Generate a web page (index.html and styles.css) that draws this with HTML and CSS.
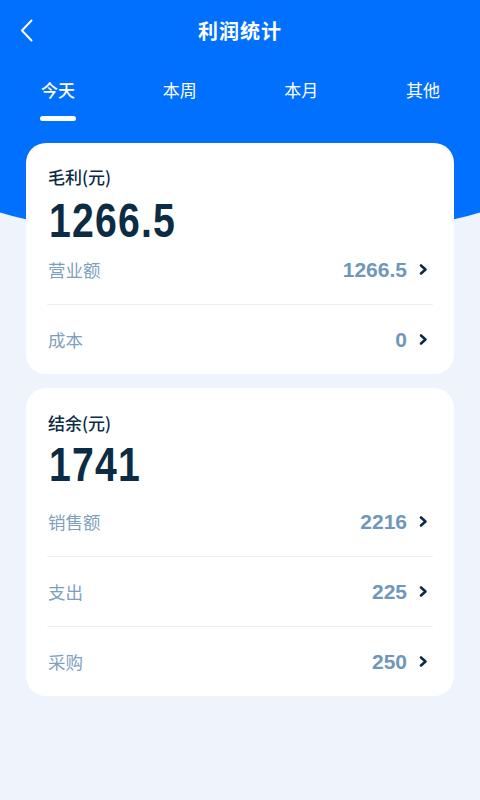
FILE: index.html
```html
<!DOCTYPE html>
<html lang="zh-CN">
<head>
<meta charset="utf-8">
<title>利润统计</title>
<link rel="stylesheet" href="styles.css">
</head>
<body>
<div class="page">
  <header class="nav">
    <div class="nav-left">
      <svg class="back" width="14" height="24" viewBox="0 0 14 24"><polyline points="11.5,1.5 2,11.5 11.5,21.5" fill="none" stroke="#fff" stroke-width="2" stroke-linecap="round" stroke-linejoin="round"/></svg>
    </div>
    <h1 class="nav-title">利润统计</h1>
    <div class="nav-right"></div>
  </header>
  <nav class="tabs">
    <div class="tab active"><span class="tab-text">今天</span><span class="tab-bar"></span></div>
    <div class="tab"><span class="tab-text">本周</span><span class="tab-bar"></span></div>
    <div class="tab"><span class="tab-text">本月</span><span class="tab-bar"></span></div>
    <div class="tab"><span class="tab-text">其他</span><span class="tab-bar"></span></div>
  </nav>
  <main class="cards">
    <section class="card card-gross">
      <div class="card-title">毛利(元)</div>
      <div class="card-amount"><span class="amount-num">1266.5</span></div>
      <div class="rows">
        <div class="row"><span class="row-label">营业额</span><span class="row-value">1266.5</span><svg class="chev" width="9" height="13" viewBox="0 0 9 13"><polyline points="2,2.5 6.5,6.5 2,10.5" fill="none" stroke="#0c2b45" stroke-width="2.6" stroke-linecap="round" stroke-linejoin="round"/></svg></div>
        <div class="row"><span class="row-label">成本</span><span class="row-value">0</span><svg class="chev" width="9" height="13" viewBox="0 0 9 13"><polyline points="2,2.5 6.5,6.5 2,10.5" fill="none" stroke="#0c2b45" stroke-width="2.6" stroke-linecap="round" stroke-linejoin="round"/></svg></div>
      </div>
    </section>
    <section class="card card-balance">
      <div class="card-title">结余(元)</div>
      <div class="card-amount"><span class="amount-num">1741</span></div>
      <div class="rows">
        <div class="row"><span class="row-label">销售额</span><span class="row-value">2216</span><svg class="chev" width="9" height="13" viewBox="0 0 9 13"><polyline points="2,2.5 6.5,6.5 2,10.5" fill="none" stroke="#0c2b45" stroke-width="2.6" stroke-linecap="round" stroke-linejoin="round"/></svg></div>
        <div class="row"><span class="row-label">支出</span><span class="row-value">225</span><svg class="chev" width="9" height="13" viewBox="0 0 9 13"><polyline points="2,2.5 6.5,6.5 2,10.5" fill="none" stroke="#0c2b45" stroke-width="2.6" stroke-linecap="round" stroke-linejoin="round"/></svg></div>
        <div class="row"><span class="row-label">采购</span><span class="row-value">250</span><svg class="chev" width="9" height="13" viewBox="0 0 9 13"><polyline points="2,2.5 6.5,6.5 2,10.5" fill="none" stroke="#0c2b45" stroke-width="2.6" stroke-linecap="round" stroke-linejoin="round"/></svg></div>
      </div>
    </section>
  </main>
</div>
</body>
</html>
```
FILE: styles.css
```css
html, body {
  margin: 0;
  padding: 0;
  background: #eff3fb;
}
body {
  font-family: "Noto Sans CJK SC", "Noto Sans", sans-serif;
  color: #0c2b45;
}
.page {
  position: relative;
  width: 480px;
  min-height: 800px;
  overflow: hidden;
  background: #eff3fb;
}
.page::before {
  content: "";
  position: absolute;
  top: 0;
  left: -60px;
  width: 600px;
  height: 240px;
  background: #0270fe;
  border-radius: 0 0 300px 300px / 0 0 69px 69px;
  z-index: 0;
}
.nav, .tabs, .cards {
  position: relative;
  z-index: 1;
}
.nav {
  height: 62px;
  display: grid;
  grid-template-columns: 1fr auto 1fr;
  align-items: center;
}
.nav-left {
  padding-left: 20px;
  display: flex;
  align-items: center;
}
.back {
  display: block;
}
.nav-title {
  margin: 0;
  font-size: 20px;
  font-weight: 700;
  color: #fff;
  line-height: 28px;
  letter-spacing: 1px;
}
.tabs {
  display: flex;
  justify-content: space-between;
  padding: 16px 39px 0 40px;
}
.tab {
  display: flex;
  flex-direction: column;
  align-items: center;
}
.tab-text {
  font-size: 17px;
  line-height: 24px;
  color: #fff;
  font-weight: 400;
}
.tab.active .tab-text {
  font-weight: 500;
}
.tab-bar {
  margin-top: 14px;
  width: 36px;
  height: 5px;
  border-radius: 3px;
  background: transparent;
}
.tab.active .tab-bar {
  background: #fff;
}
.cards {
  margin-top: 22px;
  padding: 0 26px;
  display: flex;
  flex-direction: column;
  gap: 14px;
}
.card {
  background: #fff;
  border-radius: 20px;
  padding: 22px 21px 0;
}
.card-title {
  font-size: 17px;
  line-height: 24px;
  font-weight: 500;
  color: #0c2b45;
  padding-left: 1px;
}
.card-amount {
  font-family: "Liberation Sans", "Roboto", sans-serif;
  font-weight: 700;
  font-size: 49px;
  line-height: 30px;
  color: #0c2b45;
  margin-top: 16px;
  padding-left: 2px;
}
.amount-num {
  display: inline-block;
  letter-spacing: 1.5px;
  transform: scaleX(0.8);
  transform-origin: left center;
}
.card-balance {
  padding-top: 23px;
}
.card-balance .card-amount {
  margin-top: 14px;
}
.card-balance .rows {
  margin-top: 8px;
}
.rows {
  display: flex;
  flex-direction: column;
}
.row {
  height: 69px;
  display: flex;
  align-items: center;
}
.row + .row {
  border-top: 1px solid #eceff4;
}
.row-label {
  flex: 1;
  font-size: 17.5px;
  color: #7f9fbf;
  padding-left: 1px;
}
.row-value {
  font-family: "Liberation Sans", "Roboto", sans-serif;
  font-weight: 700;
  font-size: 21px;
  color: #6f97bb;
}
.chev {
  display: block;
  margin-left: 12px;
  margin-right: 5px;
}
```
